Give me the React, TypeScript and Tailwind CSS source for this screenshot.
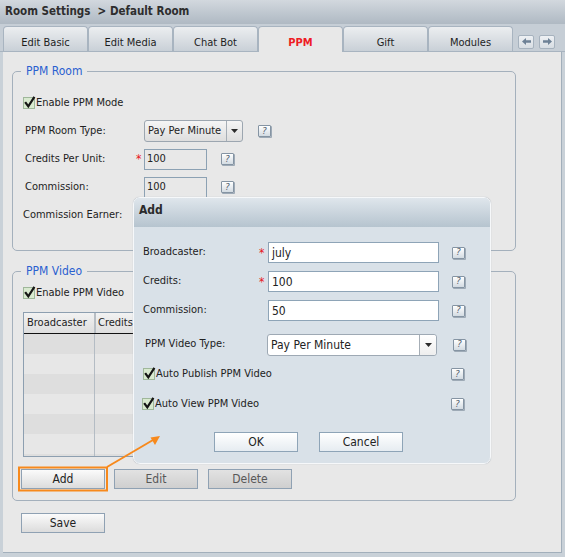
import React from "react";

const Help = ({ className = "" }: { className?: string }) => (
  <span
    className={`inline-flex w-[13px] h-[12px] shrink-0 items-center justify-center border border-[#8594a3] rounded-[1px] bg-gradient-to-b from-[#ffffff] to-[#d3dbe2] text-[9px] italic leading-none text-[#5a6673] shadow-[1px_1px_0_#9eaab6] font-['DejaVu_Sans',sans-serif] ${className}`}
  >
    ?
  </span>
);

const Check = () => (
  <svg width="14" height="14" viewBox="0 0 14 14" className="shrink-0">
    <rect x="0.5" y="1.5" width="11" height="11" fill="#d8e9cf" stroke="#9fb79a" />
    <path d="M2.8 7 L5.3 10.3 L10.8 1.8" fill="none" stroke="#151515" strokeWidth="2.2" strokeLinecap="square" />
  </svg>
);

const Caret = () => (
  <svg width="7" height="4" viewBox="0 0 7 4">
    <path d="M0 0 H7 L3.5 4 Z" fill="#2b2b2b" />
  </svg>
);

const ArrowBtn = ({ dir }: { dir: "l" | "r" }) => (
  <span className="inline-flex w-[16px] h-[14px] items-center justify-center border border-[#a6b2be] rounded-[2px] bg-gradient-to-b from-[#eef1f4] to-[#d7dde3]">
    <svg width="9" height="7" viewBox="0 0 9 7">
      {dir === "l" ? (
        <path d="M0 3.5 L4 0 V2.3 H9 V4.7 H4 V7 Z" fill="#6d8196" />
      ) : (
        <path d="M9 3.5 L5 0 V2.3 H0 V4.7 H5 V7 Z" fill="#6d8196" />
      )}
    </svg>
  </span>
);

const tabs = ["Edit Basic", "Edit Media", "Chat Bot", "PPM", "Gift", "Modules"];

export default function App() {
  return (
    <div className="relative w-[565px] h-[557px] overflow-hidden bg-[#c9d1d8] font-['DejaVu_Sans_Condensed','DejaVu_Sans',sans-serif] text-[11px] text-[#222]">
      {/* Header */}
      <div className="h-[24px] flex items-center pl-[5px] bg-gradient-to-b from-[#d2d8de] to-[#afb9c3] font-bold text-[11.5px] text-[#2e2e2e] whitespace-pre">
        Room Settings  &gt; Default Room
      </div>

      {/* Tab strip */}
      <div className="h-[28px] flex items-end pl-[3px] border-b border-[#a8b4c0] bg-[#c6ced6]">
        {tabs.map((t) =>
          t === "PPM" ? (
            <div
              key={t}
              className="relative z-10 w-[85px] h-[26px] -mb-px flex items-center justify-center pt-[8px] border-t border-l border-r border-[#a8b4c0] rounded-t-[4px] bg-[#e8e8e8] text-[#ee1c24] font-bold"
            >
              {t}
            </div>
          ) : (
            <div
              key={t}
              className="w-[85px] h-[25px] flex items-center justify-center pt-[8px] border-t border-l border-r border-[#a8b4c0] rounded-t-[4px] bg-gradient-to-b from-[#eceef0] to-[#c9d0d7] text-[#1e1e1e]"
            >
              {t}
            </div>
          )
        )}
        <div className="flex gap-[5px] ml-[5px] self-center mt-[8px]">
          <ArrowBtn dir="l" />
          <ArrowBtn dir="r" />
        </div>
      </div>

      {/* Content */}
      <div className="ml-[3px] w-[559px] h-[501px] bg-[#e8e8e8] border-r border-b border-[#a2afbb] pt-[12px] pl-[9px]">
        {/* PPM Room */}
        <fieldset className="w-[504px] h-[187px] border border-[#a4b0bc] rounded-[5px] pl-[10px] pt-[11px]">
          <legend className="ml-[-2px] px-[5px] leading-[14px] text-[12px] text-[#2a60d0]">PPM Room</legend>
          <div className="h-[28px] flex items-center">
            <Check />
            <span className="ml-[-1px]">Enable PPM Mode</span>
          </div>
          <div className="h-[28px] flex items-center">
            <span className="w-[113px] pl-[2px]">PPM Room Type:</span>
            <span className="w-[8px]" />
            <div className="w-[99px] h-[22px] flex border border-[#9ca6b0] rounded-[3px] bg-gradient-to-b from-[#f5f5f5] to-[#dedede]">
              <span className="flex-1 flex items-center pl-[3px]">Pay Per Minute</span>
              <span className="w-[16px] flex items-center justify-center border-l border-[#a6aeb6]">
                <Caret />
              </span>
            </div>
            <Help className="ml-[15px]" />
          </div>
          <div className="h-[28px] flex items-center">
            <span className="w-[113px] pl-[2px]">Credits Per Unit:</span>
            <span className="w-[8px] text-[#e8141c] text-[12px] leading-none">*</span>
            <div className="w-[63px] h-[21px] flex items-center pl-[2px] border border-[#8ca1b3]">100</div>
            <Help className="ml-[14px]" />
          </div>
          <div className="h-[28px] flex items-center">
            <span className="w-[113px] pl-[2px]">Commission:</span>
            <span className="w-[8px]" />
            <div className="w-[63px] h-[21px] flex items-center pl-[2px] border border-[#8ca1b3]">100</div>
            <Help className="ml-[14px]" />
          </div>
          <div className="h-[28px] flex items-center">
            <span className="w-[121px]">Commission Earner:</span>
            <div className="w-[99px] h-[22px] flex border border-[#9ca6b0] rounded-[3px] bg-gradient-to-b from-[#f5f5f5] to-[#dedede]" />
          </div>
        </fieldset>

        {/* PPM Video */}
        <fieldset className="mt-[13px] w-[504px] h-[237px] border border-[#a4b0bc] rounded-[5px] pl-[10px] pt-[5px]">
          <legend className="ml-[-2px] px-[5px] leading-[14px] text-[12px] text-[#2a60d0]">PPM Video</legend>
          <div className="h-[20px] flex items-center">
            <Check />
            <span className="ml-[-1px]">Enable PPM Video</span>
          </div>
          <div className="mt-[9px] w-[450px] h-[145px] border border-[#8d9fb0] overflow-hidden">
            <div className="h-[21px] flex bg-gradient-to-b from-[#f2f2f2] to-[#dedede] border-b border-[#111]">
              <div className="w-[70px] flex items-center pl-[3px]">Broadcaster</div>
              <div className="w-[2px] bg-[#b8bec4]" />
              <div className="flex-1 flex items-center pl-[2px]">Credits</div>
            </div>
            {[0, 1, 2, 3, 4, 5, 6].map((i) => (
              <div key={i} className={`h-[20px] flex ${i % 2 === 0 ? "bg-[#dedede]" : "bg-[#e7e7e7]"}`}>
                <div className="w-[71px] border-r border-[#b4bcc4]" />
                <div className="flex-1" />
              </div>
            ))}
          </div>
          <div className="mt-[12px] ml-[-2px] flex">
            <button className="w-[84px] h-[20px] border border-[#8fa1b3] bg-gradient-to-b from-[#fbfbfb] to-[#dcdcdc] text-[12px] text-[#222] leading-none">
              Add
            </button>
            <button className="ml-[9px] w-[84px] h-[20px] border border-[#8fa1b3] bg-gradient-to-b from-[#e2e2e2] to-[#cfcfcf] text-[12px] text-[#585858] leading-none">
              Edit
            </button>
            <button className="ml-[10px] w-[84px] h-[20px] border border-[#8fa1b3] bg-gradient-to-b from-[#e2e2e2] to-[#cfcfcf] text-[12px] text-[#585858] leading-none">
              Delete
            </button>
          </div>
        </fieldset>

        <button className="mt-[12px] ml-[9px] w-[84px] h-[20px] border border-[#8fa1b3] bg-gradient-to-b from-[#fbfbfb] to-[#dcdcdc] text-[12px] text-[#222] leading-none">
          Save
        </button>
      </div>

      {/* Dialog */}
      <div className="absolute left-[133px] top-[197px] w-[358px] h-[267px] rounded-[7px] border border-[#f6f8fa] bg-[#d9e1e8] overflow-hidden shadow-[0_0_1px_#a0aab4]">
        <div className="h-[29px] pl-[5px] pt-[5px] bg-gradient-to-b from-[#dfe6ec] to-[#b6c4cf] font-bold text-[12px] leading-[14px] text-[#2b2b2b]">
          Add
        </div>
        <div className="pt-[11px] pl-[9px]">
          {[
            { l: "Broadcaster:", v: "july", req: true },
            { l: "Credits:", v: "100", req: true },
            { l: "Commission:", v: "50", req: false },
          ].map((r) => (
            <div key={r.l} className="h-[29px] flex items-center">
              <span className="w-[116px]">{r.l}</span>
              <span className="w-[9px] text-[#e8141c] text-[12px] leading-none">{r.req ? "*" : ""}</span>
              <div className="w-[171px] h-[21px] flex items-center pl-[3px] border border-[#8ea4b7] bg-white text-[12px]">{r.v}</div>
              <Help className="ml-[13px]" />
            </div>
          ))}
          <div className="mt-[5px] h-[29px] flex items-center">
            <span className="w-[124px] pl-[2px]">PPM Video Type:</span>
            <div className="w-[170px] h-[22px] flex border border-[#9ea9b4] rounded-[3px] bg-white">
              <span className="flex-1 flex items-center pl-[3px] text-[12px]">Pay Per Minute</span>
              <span className="w-[17px] flex items-center justify-center border-l border-[#a6aeb6] bg-gradient-to-b from-[#ffffff] to-[#eeeeee] rounded-r-[3px]">
                <Caret />
              </span>
            </div>
            <Help className="ml-[16px]" />
          </div>
          <div className="h-[30px] flex items-center">
            <Check />
            <span className="w-[295px] ml-[-1px]">Auto Publish PPM Video</span>
            <Help className="ml-[0px]" />
          </div>
          <div className="h-[30px] flex items-center ml-[-1px]">
            <Check />
            <span className="w-[296px] ml-[-1px]">Auto View PPM Video</span>
            <Help className="ml-[0px]" />
          </div>
          <div className="mt-[13px] ml-[71px] flex">
            <button className="w-[84px] h-[20px] border border-[#8ea4b7] bg-gradient-to-b from-[#ffffff] to-[#e6ecf1] text-[12px] text-[#222] leading-none">
              OK
            </button>
            <button className="ml-[21px] w-[84px] h-[20px] border border-[#8ea4b7] bg-gradient-to-b from-[#ffffff] to-[#e6ecf1] text-[12px] text-[#222] leading-none">
              Cancel
            </button>
          </div>
        </div>
      </div>

      {/* Annotation overlay */}
      <svg className="absolute left-0 top-0 pointer-events-none" width="565" height="557" viewBox="0 0 565 557">
        <rect x="19" y="467.5" width="88" height="23" fill="none" stroke="#f7891c" strokeWidth="2" />
        <line x1="107" y1="467" x2="153" y2="440" stroke="#f7891c" strokeWidth="2" />
        <path d="M160 436 L150.5 437.5 L155 445 Z" fill="#f7891c" />
      </svg>
    </div>
  );
}
